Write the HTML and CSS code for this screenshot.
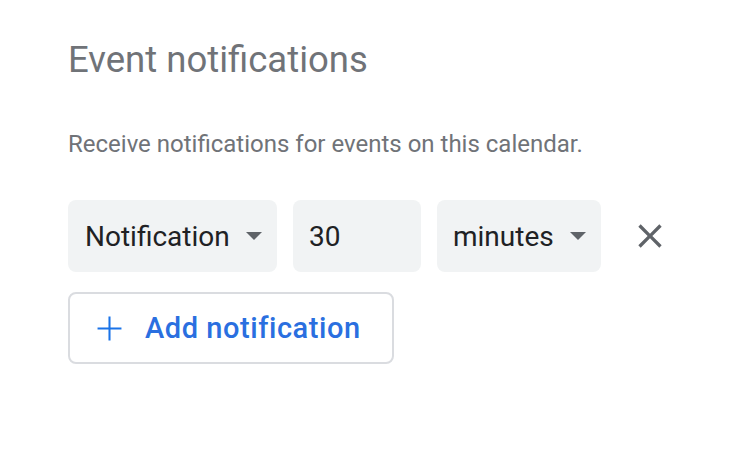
FILE: index.html
```
<!DOCTYPE html>
<html>
<head>
<meta charset="utf-8">
<link rel="stylesheet" href="styles.css">
</head>
<body>
<div class="page">
  <h1 class="title">Event notifications</h1>
  <p class="desc">Receive notifications for events on this calendar.</p>
  <div class="row">
    <div class="field select sel-type">
      <span class="label">Notification</span>
      <span class="caret"></span>
    </div>
    <div class="field num"><span class="label">30</span></div>
    <div class="field select sel-unit">
      <span class="label">minutes</span>
      <span class="caret"></span>
    </div>
    <button class="close" aria-label="Remove">
      <svg width="40" height="40" viewBox="0 0 24 24"><path d="M19 6.41L17.59 5 12 10.59 6.41 5 5 6.41 10.59 12 5 17.59 6.41 19 12 13.41 17.59 19 19 17.59 13.41 12z" fill="#5f6368"/></svg>
    </button>
  </div>
  <button class="add">
    <svg width="41" height="41" viewBox="0 0 24 24"><path d="M19 12.6h-6.4V19h-1.2v-6.4H5v-1.2h6.4V5h1.2v6.4H19z" fill="#1a73e8"/></svg>
    <span>Add notification</span>
  </button>
</div>
</body>
</html>
```
FILE: styles.css
```
html, body { margin: 0; padding: 0; background: #fff; }
body { font-family: Roboto, "Noto Sans", sans-serif; }
.page { padding: 36px 0 0 68px; }
.title {
  margin: 0;
  font-weight: 400;
  font-size: 36.5px;
  line-height: 48px;
  color: #707378;
}
.desc {
  margin: 44px 0 0 0;
  font-size: 24px;
  line-height: 32px;
  color: #707378;
}
.row { display: flex; align-items: center; margin-top: 40px; }
.field {
  height: 72px;
  background: #f1f3f4;
  border-radius: 8px;
  display: flex;
  align-items: center;
  box-sizing: border-box;
  font-size: 28px;
  color: #202124;
}
.sel-type { width: 209px; padding-left: 17px; margin-right: 16px; }
.num { width: 128px; padding-left: 16px; margin-right: 16px; }
.sel-unit { width: 164px; padding-left: 16px; }
.label { flex: 1; }
.caret {
  width: 0; height: 0;
  border-left: 8px solid transparent;
  border-right: 8px solid transparent;
  border-top: 8px solid #5f6368;
  margin-right: 15px;
}
.close {
  margin-left: 29px;
  border: 0; background: none; padding: 0;
  width: 40px; height: 40px;
  display: flex;
}
.add {
  margin-top: 20px;
  width: 326px;
  height: 72px;
  box-sizing: border-box;
  border: 2px solid #dadce0;
  border-radius: 8px;
  background: #fff;
  display: flex;
  align-items: center;
  padding: 0 0 0 19px;
  font-family: Roboto, sans-serif;
  font-weight: 500;
  font-size: 29px;
  color: #2a6fe0;
}
.add span { margin-left: 15px; letter-spacing: 0.55px; }
```
